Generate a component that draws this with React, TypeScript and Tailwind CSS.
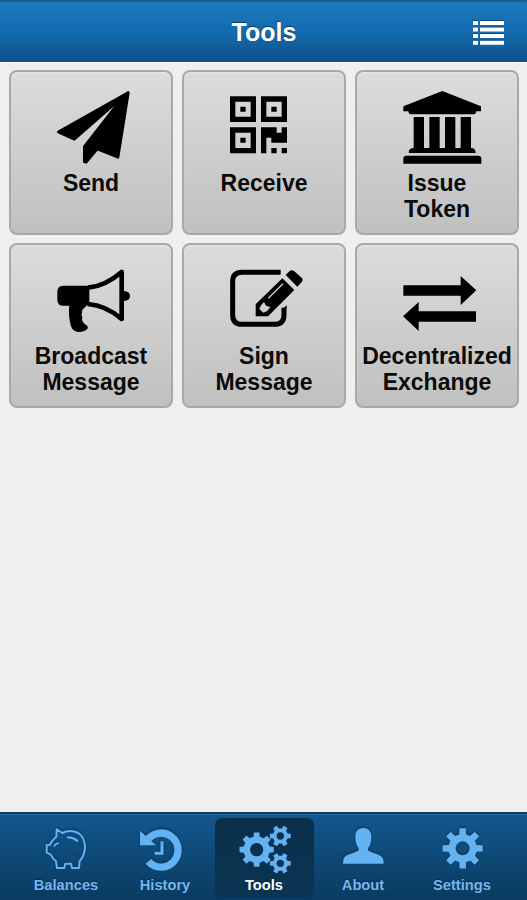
import React from "react";

// closed outline of a gear wheel with square teeth
function gearPath(cx: number, cy: number, outer: number, inner: number, hole: number, teeth: number, rotate = 0) {
  const step = (Math.PI * 2) / teeth;
  const points: string[] = [];
  for (let i = 0; i < teeth; i++) {
    const mid = i * step - Math.PI / 2 + rotate;
    const corners = [
      [inner, -0.3],
      [outer, -0.2],
      [outer, 0.2],
      [inner, 0.3],
    ];
    corners.forEach(([r, f]) => {
      const a = mid + f * step;
      points.push(`${(cx + r * Math.cos(a)).toFixed(1)} ${(cy + r * Math.sin(a)).toFixed(1)}`);
    });
  }
  return `M${points.join("L")}ZM${cx - hole} ${cy}a${hole} ${hole} 0 1 0 ${hole * 2} 0a${hole} ${hole} 0 1 0 ${-hole * 2} 0Z`;
}

const tools = [
  {
    label: ["Send"],
    viewBox: "138 87 270 234",
    icon: (
      <g strokeLinejoin="round" stroke="#000" strokeWidth="8">
        <path d="M384 98L175 216L223 238L348 128Z" />
        <path d="M385 98L354 292L292 267L258 307L253 305V260L356 128Z" />
      </g>
    ),
  },
  {
    label: ["Receive"],
    viewBox: "133 87 270 234",
    icon: (
      <>
        <path
          fillRule="evenodd"
          d="M166 109h78v77h-78ZM182 125v45h46v-45ZM259 109h78v77h-78ZM275 125v45h46v-45ZM166 202h78v78h-78ZM182 218v46h46v-46Z"
        />
        <path d="M197 140h16v15h-16ZM290 140h16v15h-16ZM197 233h16v15h-16Z" />
        <path d="M259 202h47v16h15v-16h16v46h-47v-15h-15v47h-16ZM290 264h16v16h-16ZM321 264h16v16h-16Z" />
      </>
    ),
  },
  {
    label: ["Issue", "Token"],
    viewBox: "135 87 270 234",
    icon: (
      <>
        <path d="M286 93L402 139V154H388Q387 163 380 163H192Q185 163 184 154H169V139Z" />
        <path d="M200 171H231V264H247V171H278V264H294V171H325V264H341V171H372V264Q386 264 386 279H185Q185 264 200 264Z" />
        <path d="M178 287H394Q403 287 403 296V311H169V296Q169 287 178 287Z" />
      </>
    ),
  },
  {
    label: ["Broadcast", "Message"],
    viewBox: "138 78 270 234",
    icon: (
      <>
        <path d="M190 149H268V209H190Q172 209 172 191V167Q172 149 190 149Z" />
        <path d="M208 205H257V212Q244 221 246 231Q242 237 247 244Q243 254 254 264Q264 269 264 276Q256 288 235 288Q219 287 213 271Q204 240 208 205Z" />
        <path
          d="M264 155Q315 151 365 108V249Q318 208 264 204"
          fill="none"
          stroke="#000"
          strokeWidth="14"
          strokeLinejoin="round"
        />
        <path d="M372 165Q390 167 390 180Q390 193 372 195Z" />
      </>
    ),
  },
  {
    label: ["Sign", "Message"],
    viewBox: "133 78 270 234",
    icon: (
      <>
        <path
          d="M318 109H202Q174 109 174 137V237Q174 265 202 265H300Q328 265 328 237V215"
          fill="none"
          stroke="#000"
          strokeWidth="15"
        />
        <path d="M336 216V208L321 221V226Z" />
        <path d="M323 127L359 162L280 241H243V205Z" />
        <path d="M333 117L344 106Q350 100 358 105L379 124Q387 130 382 137L368 152Z" />
        <path d="M281 187L325 143" stroke="#d0d0d0" strokeWidth="4" />
        <path d="M259 208L268 198L274 209L287 213L278 225L266 230L254 219Z" fill="#d0d0d0" />
      </>
    ),
  },
  {
    label: ["Decentralized", "Exchange"],
    viewBox: "135 78 270 234",
    icon: <path d="M169 148H341V120L388 163L341 207V179H169ZM387 226H215V198L168 241L215 285V257H387Z" />,
  },
];

const tabs = [
  {
    label: "Balances",
    viewBox: "108 72 180 144",
    icon: (
      <g fill="none" stroke="currentColor" strokeWidth="6" strokeLinejoin="round" strokeLinecap="round">
        <path d="M170 88L187 99Q210 87 235 99Q255 112 255 143Q253 168 239 183L237 204H216L213 191H196L193 204H171L168 184Q158 176 152 163L140 158V136L150 134Q155 121 169 110Z" />
        <path d="M204 112Q220 111 231 122" strokeWidth="7" />
        <path d="M163 138Q166 130 175 130" strokeWidth="5" />
      </g>
    ),
  },
  {
    label: "History",
    viewBox: "405 72 180 144",
    icon: (
      <>
        <path d="M440 123A51 51 0 1 1 445 184" fill="none" stroke="currentColor" strokeWidth="22" />
        <path d="M420 92L468 136H420Z" />
        <path d="M486 124V160H464" fill="none" stroke="currentColor" strokeWidth="9" />
      </>
    ),
  },
  {
    label: "Tools",
    viewBox: "102 72 180 144",
    active: true,
    icon: (
      <>
        <path fillRule="evenodd" d={gearPath(170, 149, 52, 40, 20, 8)} />
        <path fillRule="evenodd" d={gearPath(241, 108, 32, 23, 11, 6, 0.52)} />
        <path fillRule="evenodd" d={gearPath(241, 190, 32, 23, 11, 6, 0.52)} />
      </>
    ),
  },
  {
    label: "About",
    viewBox: "39 72 180 144",
    icon: (
      <path d="M130 84C149 84 155 97 154 115C153 130 149 139 144 144V151C149 158 181 162 188 174Q191 179 191 191H69Q69 179 72 174C79 162 111 158 116 151V144C111 139 107 130 106 115C105 97 111 84 130 84Z" />
    ),
  },
  {
    label: "Settings",
    viewBox: "336 72 180 144",
    icon: <path fillRule="evenodd" d={gearPath(428, 145, 61, 43, 21, 8)} />,
  },
];

export default function App() {
  return (
    <div className="flex h-[900px] w-[527px] flex-col overflow-hidden bg-[#efefef] font-['Liberation_Sans',Arial,sans-serif] font-bold">
      <header className="grid h-[62px] shrink-0 grid-cols-[1fr_auto_1fr] items-center border-t-2 border-[#1b5c8c] bg-linear-to-b from-[#1a79bf] via-[#146bae] to-[#0e5189] pb-px shadow-[0_1px_0_#ffffff]">
        <span />
        <h1 className="pt-px pl-px text-[25px] leading-8 text-white [text-shadow:0_-1px_1px_#0b3c66]">Tools</h1>
        <button className="mt-0.5 mr-[23px] justify-self-end text-white" aria-label="Menu">
          <svg className="block h-6 w-[31px] drop-shadow-[0_-1px_0_#0b4475]" viewBox="0 0 31 24" fill="currentColor">
            <path d="M0 0h5v4H0ZM7 0h24v4H7ZM0 6.5h5v4H0ZM7 6.5h24v4H7ZM0 13h5v4H0ZM7 13h24v4H7ZM0 19.7h5v4H0ZM7 19.7h24v4H7Z" />
          </svg>
        </button>
      </header>

      <main className="flex-1 pt-2 pr-2 pl-[9px]">
        <div className="grid grid-cols-3 gap-x-[9px] gap-y-2">
          {tools.map((tool) => (
            <button
              key={tool.label.join(" ")}
              className="flex h-[165px] flex-col items-center rounded-[8px] border-2 border-[#a8a8a8] bg-linear-to-b from-[#dcdcdc] to-[#c0c0c0] pt-[17px] text-[23px] leading-[26px] text-[#0b0b0b] shadow-[inset_0_2px_1px_#e2e2e2]"
            >
              <svg className="mb-[3px] h-[78px] w-[90px] shrink-0" viewBox={tool.viewBox}>
                {tool.icon}
              </svg>
              {tool.label.map((line) => (
                <span key={line} className="whitespace-nowrap">
                  {line}
                </span>
              ))}
            </button>
          ))}
        </div>
      </main>

      <nav className="flex h-[88px] shrink-0 justify-center border-t-2 border-[#0b3b64] bg-linear-to-b from-[#12588f] to-[#0a3b60] pt-1 pl-px shadow-[inset_0_1px_0_#2869a0]">
        {tabs.map((tab) => (
          <button
            key={tab.label}
            className={
              "flex h-20 w-[99px] flex-col items-center rounded-[7px] pt-1.5 text-[14.7px] leading-[18px] [text-shadow:0_-1px_1px_#062c4b] " +
              (tab.active ? "bg-linear-to-b from-[#0b2f49] to-[#0a3553] text-white" : "text-[#75b7ed]")
            }
          >
            <svg
              className="mb-1 h-12 w-[60px] shrink-0 overflow-visible text-[#64b2f2] drop-shadow-[0_-1px_1px_#073558]"
              viewBox={tab.viewBox}
              fill="currentColor"
            >
              {tab.icon}
            </svg>
            {tab.label}
          </button>
        ))}
      </nav>
    </div>
  );
}
